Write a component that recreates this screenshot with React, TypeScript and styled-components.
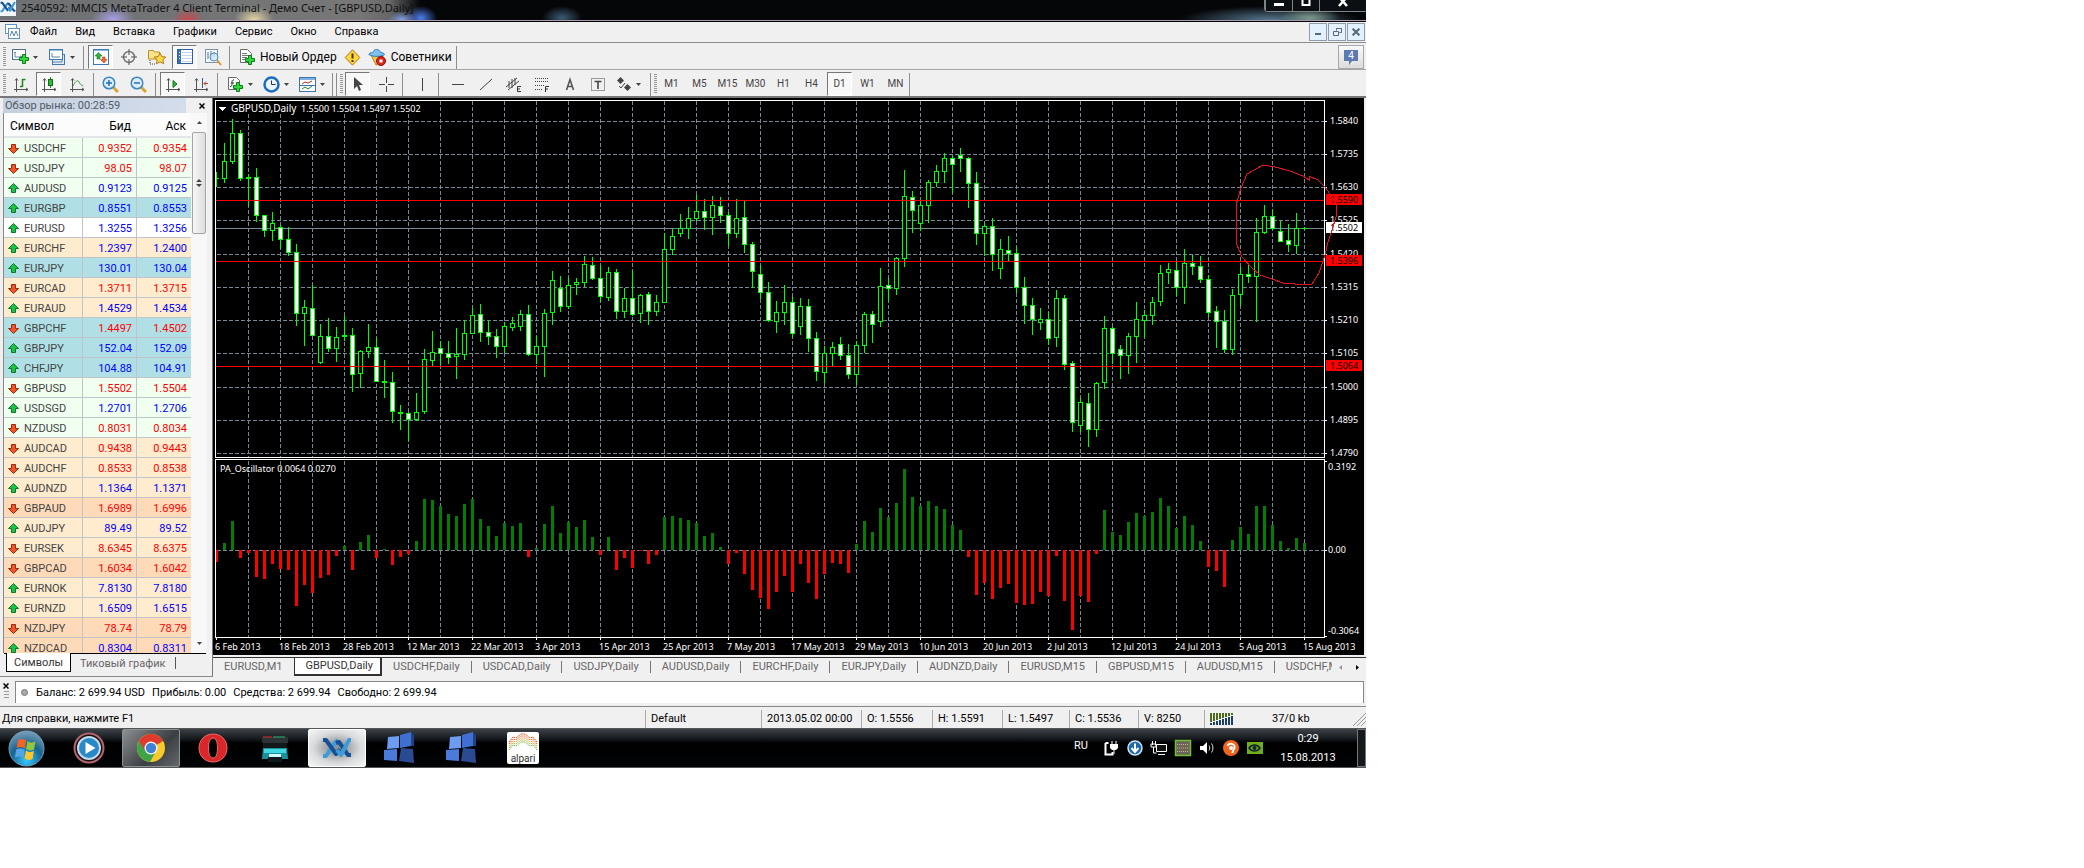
import React from "react";
import styled, { createGlobalStyle, css } from "styled-components";

const GlobalStyle = createGlobalStyle`
  *, *::before, *::after { box-sizing: border-box; }
  body {
    margin: 0;
    background: #fff;
    color: #000;
    font: 11px/14px Roboto, "Noto Sans", sans-serif;
  }
  button { font: inherit; color: inherit; margin: 0; padding: 0; border: 0; background: none; }
  svg { display: block; flex: none; }
`;

/* ---------- data ---------- */

type Tone = "mint" | "sky" | "plain" | "cream" | "peach";

const toneColor: Record<Tone, string> = {
  mint: "#f0fff0",
  sky: "#b0e0e6",
  plain: "#ffffff",
  cream: "#ffebcd",
  peach: "#ffdab9",
};

const quotes: [string, string, string, boolean, Tone][] = [
  ["USDCHF", "0.9352", "0.9354", false, "mint"],
  ["USDJPY", "98.05", "98.07", false, "mint"],
  ["AUDUSD", "0.9123", "0.9125", true, "mint"],
  ["EURGBP", "0.8551", "0.8553", true, "sky"],
  ["EURUSD", "1.3255", "1.3256", true, "plain"],
  ["EURCHF", "1.2397", "1.2400", true, "cream"],
  ["EURJPY", "130.01", "130.04", true, "sky"],
  ["EURCAD", "1.3711", "1.3715", false, "cream"],
  ["EURAUD", "1.4529", "1.4534", true, "cream"],
  ["GBPCHF", "1.4497", "1.4502", false, "sky"],
  ["GBPJPY", "152.04", "152.09", true, "sky"],
  ["CHFJPY", "104.88", "104.91", true, "sky"],
  ["GBPUSD", "1.5502", "1.5504", false, "mint"],
  ["USDSGD", "1.2701", "1.2706", true, "mint"],
  ["NZDUSD", "0.8031", "0.8034", false, "mint"],
  ["AUDCAD", "0.9438", "0.9443", false, "cream"],
  ["AUDCHF", "0.8533", "0.8538", false, "cream"],
  ["AUDNZD", "1.1364", "1.1371", true, "cream"],
  ["GBPAUD", "1.6989", "1.6996", false, "peach"],
  ["AUDJPY", "89.49", "89.52", true, "cream"],
  ["EURSEK", "8.6345", "8.6375", false, "cream"],
  ["GBPCAD", "1.6034", "1.6042", false, "peach"],
  ["EURNOK", "7.8130", "7.8180", true, "cream"],
  ["EURNZD", "1.6509", "1.6515", true, "cream"],
  ["NZDJPY", "78.74", "78.79", false, "peach"],
  ["NZDCAD", "0.8304", "0.8311", true, "peach"],
];

/* high, body top, body bottom, low, 1 = falling day */
const candles: number[][] = [
  [77,83,84,92,1],[48,66,84,88,0],[24,38,67,69,0],[35,38,84,86,1],[79,82,84,111,1],[73,82,121,127,1],
  [120,120,136,142,1],[117,128,136,146,0],[130,132,145,154,1],[132,144,158,161,1],[149,157,219,231,1],
  [205,212,219,251,0],[190,213,241,241,1],[229,241,268,269,0],[223,241,254,257,1],[232,242,254,267,0],
  [221,240,242,246,1],[233,240,280,297,1],[255,256,279,293,0],[229,252,257,263,0],[243,252,287,287,1],
  [265,286,288,303,1],[277,287,317,328,1],[310,317,319,335,1],[317,318,325,346,1],[298,317,325,326,0],
  [254,264,317,319,0],[236,257,266,271,0],[246,253,259,270,1],[246,258,263,269,1],[233,259,262,284,0],
  [225,238,260,265,0],[213,220,239,239,0],[209,219,238,247,1],[226,237,242,250,1],[234,241,252,263,1],
  [227,231,252,258,0],[222,228,233,236,0],[215,219,232,236,0],[210,219,260,261,1],[241,251,260,269,0],
  [214,218,252,282,0],[176,185,218,230,0],[181,193,212,217,1],[183,190,212,214,0],[183,187,190,200,0],
  [161,169,188,192,0],[162,170,184,185,1],[170,183,202,207,1],[172,177,203,206,0],[174,177,217,224,1],
  [193,203,217,223,0],[175,203,220,221,1],[199,200,219,228,0],[197,199,217,230,1],[200,207,217,221,0],
  [138,154,208,208,0],[134,141,155,160,0],[119,133,139,142,0],[112,123,134,144,0],[100,116,124,126,0],
  [104,116,123,135,1],[101,110,123,140,0],[102,111,121,128,1],[117,120,139,151,1],[104,123,139,143,0],
  [106,122,150,158,1],[147,149,177,193,1],[170,179,198,204,1],[187,197,226,227,1],[206,217,227,238,0],
  [190,207,218,230,0],[202,207,239,243,1],[203,211,232,240,0],[204,211,244,257,1],[237,243,277,286,1],
  [251,258,278,288,0],[247,252,259,271,0],[242,249,261,265,1],[249,260,280,284,1],[246,250,280,290,0],
  [217,219,251,258,0],[216,219,230,248,1],[173,191,227,232,0],[183,190,194,206,1],[162,163,194,200,0],
  [75,101,164,172,0],[96,102,116,138,1],[106,110,129,136,0],[85,87,111,128,0],[70,76,88,92,0],
  [58,63,77,88,0],[61,63,70,98,1],[53,60,64,77,1],[62,63,89,113,1],[77,88,139,150,1],
  [128,131,139,161,0],[123,131,160,176,1],[144,154,174,184,0],[141,155,159,166,1],[152,158,193,198,1],
  [182,192,211,229,1],[203,210,225,240,1],[213,224,228,235,0],[217,224,244,250,1],[195,203,243,252,0],
  [200,203,270,275,1],[266,268,328,337,1],[303,307,331,337,0],[298,308,335,352,1],[287,288,335,342,0],
  [221,233,288,294,0],[232,233,259,269,1],[250,254,261,284,1],[238,241,261,279,0],[207,224,242,268,0],
  [215,220,226,243,0],[202,207,221,230,0],[170,178,207,211,0],[168,174,178,189,0],[167,175,193,201,1],
  [154,168,193,209,0],[160,168,172,180,1],[161,171,185,188,1],[180,184,218,222,1],[211,216,227,253,1],
  [215,226,255,258,1],[194,200,255,260,0],[172,179,200,211,0],[170,179,182,188,1],[123,137,182,227,0],
  [110,121,138,139,0],[115,121,134,135,1],[126,136,147,147,1],[129,145,150,157,1],[118,133,151,159,0],
  [132,133,134,135,1],
];

const oscillator = [
  -12,7,29,-8,-3,-27,-29,-14,-19,-20,-56,-35,-43,-28,-25,-6,4,-20,8,15,-8,1,-15,-7,-4,9,51,50,44,36,34,46,51,
  31,24,14,27,24,27,-7,2,26,44,17,28,23,30,13,-5,13,-20,-8,-18,-1,-14,-5,33,34,32,30,27,14,17,3,-14,-3,-24,
  -40,-48,-59,-42,-26,-42,-14,-33,-49,-24,-13,-14,-23,6,29,18,42,33,47,81,53,44,49,44,41,25,20,-7,-45,-33,
  -49,-38,-34,-53,-55,-54,-42,-46,-6,-51,-80,-46,-52,-4,40,18,15,28,37,34,38,52,44,22,34,25,9,-17,-21,-37,
  10,23,16,44,44,25,9,2,12,7,
];

const priceScale: [string, number][] = [
  ["1.5840", 26], ["1.5735", 59], ["1.5630", 92], ["1.5525", 125], ["1.5420", 159], ["1.5315", 192],
  ["1.5210", 225], ["1.5105", 258], ["1.5000", 292], ["1.4895", 325], ["1.4790", 358],
];

const levels: [string, number][] = [["1.5590", 105], ["1.5396", 166], ["1.5064", 271]];

const dates = [
  "6 Feb 2013", "18 Feb 2013", "28 Feb 2013", "12 Mar 2013", "22 Mar 2013", "3 Apr 2013", "15 Apr 2013",
  "25 Apr 2013", "7 May 2013", "17 May 2013", "29 May 2013", "10 Jun 2013", "20 Jun 2013", "2 Jul 2013",
  "12 Jul 2013", "24 Jul 2013", "5 Aug 2013", "15 Aug 2013",
];

const chartTabs = [
  "EURUSD,M1", "GBPUSD,Daily", "USDCHF,Daily", "USDCAD,Daily", "USDJPY,Daily", "AUDUSD,Daily", "EURCHF,Daily",
  "EURJPY,Daily", "AUDNZD,Daily", "EURUSD,M15", "GBPUSD,M15", "AUDUSD,M15", "USDCHF,M15",
];

/* ---------- shell ---------- */

const Desktop = styled.div`
  width: 100%;
  max-width: 1366px;
  display: flex;
  flex-direction: column;
  background: #f1f0f1;
  overflow: hidden;
`;

const TitleBar = styled.header`
  height: 22px;
  display: flex;
  align-items: flex-start;
  border-bottom: 1px solid #000;
  box-shadow: inset 0 -1px #a89aac;
  background:
    radial-gradient(ellipse 22px 14px at 113px 20px, #a9a0ea, transparent),
    radial-gradient(ellipse 16px 12px at 188px 20px, #c8474b, transparent),
    radial-gradient(ellipse 20px 14px at 254px 20px, #e3d6a4, transparent),
    radial-gradient(ellipse 14px 9px at 402px 20px, #86a4ef, transparent),
    radial-gradient(ellipse 16px 12px at 421px 18px, #4c7ff0, transparent),
    radial-gradient(ellipse 20px 12px at 562px 18px, #3d5c74, transparent),
    radial-gradient(ellipse 30px 10px at 1310px 18px, #7d9a8c, transparent),
    radial-gradient(ellipse 90px 14px at 1270px 20px, #56788e, transparent),
    linear-gradient(90deg, #6d7173 0, #777 360px, #666 390px, #050608 420px);
`;

const AppLogo = styled.span`
  width: 16px;
  height: 16px;
  overflow: hidden;
  background: #f2f6fa;
`;

const Title = styled.h1`
  margin: 0 auto 0 5px;
  font: 11px/15px "Noto Sans", sans-serif;
  white-space: nowrap;
  color: #111;
`;

const CaptionButtons = styled.div`
  height: 12px;
  display: flex;
  border: 1px solid #7d8587;
  border-top: 0;
  border-right: 0;
  border-radius: 0 0 0 4px;
`;

const CaptionButton = styled.button<{ $wide?: boolean }>`
  width: ${(p) => (p.$wide ? 47 : 27)}px;
  height: 11px;
  overflow: hidden;
  display: flex;
  justify-content: center;
  color: #fff;
  border-left: 1px solid #7d8587;
  background: #0b0f14;
`;

const MenuBar = styled.nav`
  height: 21px;
  display: flex;
  align-items: center;
  padding-left: 5px;
  border-bottom: 1px solid #8d8d8d;
`;

const MenuItem = styled.button`
  padding: 0 9px;
  white-space: nowrap;
`;

const MenuList = styled.div`
  display: flex;
  margin-right: auto;
`;

const MdiButton = styled.button`
  width: 18px;
  height: 18px;
  margin-right: 1px;
  display: grid;
  place-items: center;
  border: 1px solid #8e9bab;
  background: #e3f0fd;
  color: #56687c;
`;

const Toolbar = styled.div<{ $last?: boolean }>`
  height: ${(p) => (p.$last ? 28 : 27)}px;
  display: flex;
  align-items: center;
  padding: 2px 0 0 3px;
  border-bottom: ${(p) => (p.$last ? "2px solid #777" : "1px solid #a4a4a4")};
`;

const Grip = styled.span`
  width: 3px;
  height: 20px;
  margin-right: 2px;
  flex: none;
  background: repeating-linear-gradient(#999 0 1px, transparent 1px 2px);
`;

const Separator = styled.span<{ $before?: number; $after?: number }>`
  width: 1px;
  height: 23px;
  flex: none;
  margin: 0 ${(p) => p.$after ?? 4}px 0 ${(p) => p.$before ?? 4}px;
  background: #8d8d8d;
`;

const Group = styled.div`
  display: flex;
  gap: 3px;
`;

const pressedStyle = css`
  border: 1px solid;
  border-color: #777 #fff #fff #777;
  background: #f8f8f8;
`;

const ToolButton = styled.button<{ $pressed?: boolean }>`
  width: 25px;
  height: 24px;
  display: grid;
  place-items: center;
  color: #444;
  ${(p) => p.$pressed && pressedStyle}
`;

const DropButton = styled.button<{ $wide?: boolean }>`
  width: ${(p) => (p.$wide ? 37 : 36)}px;
  height: 24px;
  padding-left: 3px;
  display: flex;
  align-items: center;
  gap: 4px;
`;

const LabelButton = styled.button<{ $gap: number }>`
  height: 24px;
  display: flex;
  align-items: center;
  gap: ${(p) => p.$gap}px;
  padding: 0 3px;
  font-size: 12px;
  white-space: nowrap;
`;

const PeriodButton = styled(ToolButton)`
  font-size: 10px;
`;

const NewsButton = styled.button`
  width: 26px;
  height: 24px;
  margin: 0 2px 0 auto;
  display: grid;
  place-items: center;
  border: 1px solid #a8a8a8;
  background: linear-gradient(#fafafa, #dcdcdc);
`;

/* ---------- market watch ---------- */

const Workspace = styled.main`
  display: flex;
`;

const WatchPanel = styled.section`
  width: 213px;
  flex: none;
  display: flex;
  flex-direction: column;
  margin-bottom: 4px;
  padding: 0 5px 0 3px;
  border-right: 1px solid #777;
  border-bottom: 1px solid #888;
`;

const WatchTitle = styled.div`
  height: 15px;
  display: flex;
  justify-content: space-between;
  color: #4f5a66;
  h2 {
    flex: 1;
    margin: 0 11px 0 0;
    padding-left: 2px;
    font: 11px/15px Roboto, "Noto Sans", sans-serif;
    background: linear-gradient(90deg, #c5cfde, #d3ddec);
  }
  button { width: 10px; display: grid; place-items: center; color: #000; }
`;

const WatchBody = styled.div`
  flex: 1 1 0;
  min-height: 0;
  overflow: hidden;
  display: flex;
  border-left: 1px solid #888;
`;

const QuoteTable = styled.table`
  width: 187px;
  align-self: flex-start;
  table-layout: fixed;
  border-collapse: separate;
  border-spacing: 0;
  th {
    height: 25px;
    padding: 2px 5px 0 6px;
    text-align: right;
    font-weight: 400;
    font-size: 12px;
    background: #fcfcfc;
    border-bottom: 2px solid #e3e6e8;
  }
  th:first-child { text-align: left; }
  td {
    height: 20px;
    padding: 2px 4px 0 0;
    text-align: right;
    border-bottom: 1px solid #c0c4c8;
    border-left: 1px solid #c0c4c8;
  }
  td:first-child { border-left: 0; }
`;

const QuoteRow = styled.tr<{ $tone: Tone; $up: boolean }>`
  background: ${(p) => toneColor[p.$tone]};
  color: ${(p) => (p.$up ? "#0000ff" : "#ff0000")};
`;

const SymbolCell = styled.span`
  display: flex;
  align-items: center;
  gap: 5px;
  padding-left: 4px;
  color: #444;
`;

const ScrollTrack = styled.div`
  width: 16px;
  display: flex;
  flex-direction: column;
  align-items: center;
  justify-content: space-between;
  background: #f8f8f8;
`;

const ScrollTop = styled.div`
  display: flex;
  flex-direction: column;
  align-items: center;
`;

const ArrowButton = styled.button`
  width: 16px;
  height: 19px;
  display: grid;
  place-items: center;
`;

const ScrollThumb = styled.div`
  width: 14px;
  height: 102px;
  display: grid;
  place-items: center;
  border: 1px solid #a5a5a5;
  border-radius: 2px;
  background: linear-gradient(90deg, #f6f6f6, #dedede);
`;

const WatchTabs = styled.div`
  height: 23px;
  display: flex;
  align-items: flex-start;
  padding-left: 2px;
  margin: 0 1px;
  border-top: 1px solid #000;
`;

const WatchTab = styled.button<{ $active?: boolean }>`
  height: 18px;
  padding: 1px 11px 0 9px;
  color: #666;
  background: linear-gradient(#555, #555) right 3px / 1px 12px no-repeat;
  ${(p) =>
    p.$active &&
    css`
      margin-top: -1px;
      height: 19px;
      padding: 1px 7px 0;
      color: #333;
      background: #fff;
      border: 1px solid #000;
      border-top: 0;
    `}
`;

/* ---------- chart ---------- */

const ChartArea = styled.section`
  flex: 1;
  min-width: 0;
  display: flex;
  flex-direction: column;
`;

const ChartCanvas = styled.div`
  margin-right: 2px;
  overflow: hidden;
  background: #000;
`;

const ChartTabs = styled.div`
  height: 24px;
  margin-top: 2px;
  display: flex;
  align-items: flex-start;
  overflow: hidden;
  border-top: 1px solid #333;
`;

const ChartTabList = styled.div`
  flex: 1;
  min-width: 0;
  display: flex;
  overflow: hidden;
`;

const ChartTab = styled.button<{ $active?: boolean; $bare?: boolean }>`
  flex: none;
  height: 18px;
  padding: 0 12px 0 11px;
  white-space: nowrap;
  color: #666;
  background: linear-gradient(#777, #777) right 3px / 1px 12px no-repeat;
  ${(p) => p.$bare && "background: none;"}
  ${(p) =>
    p.$active &&
    css`
      padding: 0 7px 0 10px;
      color: #333;
      background: #fff;
      border: 1px solid #333;
      border-width: 0 2px 2px 1px;
    `}
`;

const TabArrow = styled.button`
  width: 17px;
  height: 18px;
  display: grid;
  place-items: center;
`;

/* ---------- bottom bars ---------- */

const TerminalPane = styled.section`
  height: 26px;
  display: flex;
  padding-bottom: 3px;
  border-bottom: 1px solid #888;
`;

const TerminalGrip = styled.div`
  width: 15px;
  display: flex;
  flex-direction: column;
  align-items: center;
  gap: 2px;
  padding: 2px 3px 0 0;
  span {
    width: 5px;
    height: 9px;
    background: repeating-linear-gradient(#999 0 1px, transparent 1px 3px);
  }
`;

const BalanceBox = styled.div`
  flex: 1;
  margin-right: 2px;
  display: flex;
  align-items: center;
  gap: 7px;
  padding-left: 5px;
  white-space: nowrap;
  background: #fff;
  border: 1px solid #888;
  border-width: 1px 1px 0;
  i { width: 7px; height: 7px; margin-right: 1px; border-radius: 4px; background: #aaa; border: 1px solid #777; }
`;

const StatusBar = styled.footer`
  height: 21px;
  display: flex;
  align-items: flex-end;
  background: #f1f0f1;
  white-space: nowrap;
`;

const StatusHint = styled.span`
  flex: 1;
  padding: 0 0 2px 2px;
`;

const StatusCell = styled.span<{ $w: number }>`
  width: ${(p) => p.$w}px;
  height: 18px;
  display: flex;
  align-items: center;
  padding-left: 5px;
  border-left: 1px solid #aaa;
`;

const Traffic = styled.span`
  margin: 0 auto 0 38px;
`;

const Taskbar = styled.div`
  height: 40px;
  display: flex;
  align-items: center;
  gap: 4px;
  color: #fff;
  border-top: 1px solid #555;
  border-bottom: 1px solid #555;
  background: linear-gradient(#3c4248, #15191d 10px, #000 14px, #020406);
`;

const StartButton = styled.button`
  width: 56px;
  padding-left: 8px;
`;

const TaskButton = styled.button<{ $state?: "open" | "active" }>`
  width: 58px;
  height: 38px;
  display: grid;
  place-items: center;
  border-radius: 2px;
  ${(p) => p.$state === "open" && "border: 1px solid #8b9092; background: linear-gradient(135deg, #8c9093, #3b3f42 60%, #63686b);"}
  ${(p) => p.$state === "active" && "border: 1px solid #fff; background: radial-gradient(ellipse at center, #8f9395 15%, #d9dbdc 60%, #f6f6f6);"}
`;

const Language = styled.span`
  margin: 0 10px 4px auto;
`;

const Tray = styled.div`
  display: flex;
  gap: 6px;
`;

const Clock = styled.time`
  width: 80px;
  display: flex;
  flex-direction: column;
  gap: 5px;
  text-align: center;
`;

const ShowDesktop = styled.button`
  width: 9px;
  height: 38px;
  margin-left: 5px;
  border: 1px solid #777;
  background: #15191d;
`;

/* ---------- small icons ---------- */

const Caret = ({ dir = "down", color = "#444" }: { dir?: "down" | "up" | "left" | "right"; color?: string }) => {
  const turn = { down: 0, up: 180, left: 90, right: 270 }[dir];
  return (
    <svg width="5" height="5" viewBox="0 0 5 5">
      <path d="M0 1h5L2.5 4z" fill={color} transform={`rotate(${turn} 2.5 2.5)`} />
    </svg>
  );
};

const CloseMark = ({ size = 6 }: { size?: number }) => (
  <svg width={size} height={size} viewBox="0 0 6 6">
    <path d="M.5.5l5 5M5.5.5l-5 5" stroke="currentColor" strokeWidth="1.5" />
  </svg>
);

const Trend = ({ up }: { up: boolean }) => (
  <svg width="11" height="11" viewBox="0 0 11 11">
    <path
      d="M5.500.500L10.500 5.500H7.500V9.500H3.500V5.500H.500z"
      fill={up ? "#1fc04a" : "#f2552a"}
      stroke={up ? "#0b7a26" : "#9c2a0c"}
      strokeWidth="1"
      transform={up ? undefined : "rotate(180 5.5 5.5)"}
    />
  </svg>
);

const Plus = ({ x, y }: { x: number; y: number }) => (
  <path
    transform={`translate(${x} ${y})`}
    d="M3.500.500h3v3h3v3h-3v3h-3v-3h-3v-3h3z"
    fill="#2fd93c"
    stroke="#0a7f17"
  />
);

const Icon = ({ children, size = 16 }: { children: React.ReactNode; size?: number }) => (
  <svg width={size} height={size} viewBox={`0 0 ${size} ${size}`} fill="none">
    {children}
  </svg>
);

const NewChartIcon = () => (
  <Icon size={18}>
    <rect x="1.500" y="1.500" width="13" height="10" fill="#fff" stroke="#4d6f90" />
    <path d="M4 4v5h7M3 5l1-1 1 1M9 8l2 1-2 1" stroke="#6585a5" />
    <Plus x={8} y={6} />
  </Icon>
);

const ProfilesIcon = () => (
  <Icon size={18}>
    <rect x="4.500" y="6.500" width="12" height="10" fill="#dcebf8" stroke="#4178ad" />
    <rect x="1.500" y="1.500" width="13" height="10" fill="#fff" stroke="#4178ad" />
    <path d="M2 2.500h12" stroke="#9cc3e6" />
    <path d="M4 5v4h8M5 14h9v-3" stroke="#5e86ac" />
  </Icon>
);

const MarketWatchIcon = () => (
  <Icon>
    <rect x=".500" y=".500" width="15" height="15" fill="#fff" stroke="#3f78b5" />
    <path d="M1 1.500h14" stroke="#8db8e2" />
    <path d="M5.500 3.500L9 7H7v3H4V7H2z" fill="#2db53c" stroke="#15791f" strokeWidth=".600" />
    <path d="M11 14l3-3.500h-2V8h-2.500v2.500H7.500z" fill="#f06a3a" stroke="#a93512" strokeWidth=".600" />
  </Icon>
);

const TargetIcon = () => (
  <Icon>
    <circle cx="8" cy="8" r="5.500" stroke="#777" strokeWidth="1.500" />
    <path d="M8 0v6M8 10v6M0 8h6M10 8h6" stroke="#555" />
  </Icon>
);

const NavigatorIcon = () => (
  <Icon size={18}>
    <path d="M.500 3.500V2.500h5l1 1.500h5v7h-11z" fill="#f8e28a" stroke="#b98f1e" />
    <path d="M2 12v4h5" stroke="#444" strokeDasharray="1 1" />
    <path d="M12 5l1.800 3.600 4 .5-3 2.700.9 4-3.700-2-3.600 2 .8-4-3-2.700 4-.5z" fill="#ffd94a" stroke="#b07a12" />
  </Icon>
);

const TerminalIcon = () => (
  <Icon>
    <rect x=".500" y=".500" width="15" height="14" fill="#fff" stroke="#2f5f9d" />
    <rect x="1" y="1" width="3" height="13" fill="#3a6fb0" />
    <path d="M5 3.500h10M5 6.500h10M5 9.500h10M5 12.500h10" stroke="#c6d6ea" />
    <path d="M2 3.500h1M2 6.500h1M2 9.500h1" stroke="#fff" />
  </Icon>
);

const TesterIcon = () => (
  <Icon size={18}>
    <rect x="1.500" y="1.500" width="12" height="13" fill="#f6f9fc" stroke="#7d93a8" />
    <path d="M4 4v7M7 3v8M10 4v5" stroke="#54708c" />
    <circle cx="10" cy="9" r="4" fill="#cfe6fa" fillOpacity=".8" stroke="#4e8cc4" />
    <path d="M13 12l4 5" stroke="#d19a2a" strokeWidth="2" />
  </Icon>
);

const OrderIcon = () => (
  <Icon size={17}>
    <path d="M1.500.500h7l4 4v9h-11z" fill="#fff" stroke="#6b6b6b" />
    <path d="M3 4.500h5M3 6.500h7M3 8.500h5M3 10.500h4" stroke="#777" />
    <Plus x={6} y={6} />
  </Icon>
);

const AlertIcon = () => (
  <Icon size={17}>
    <path d="M8.500.800L15.800 8.500 8.500 16.200 1.200 8.500z" fill="#ffd83d" stroke="#a87a12" />
    <path d="M8.500 4.500v5M8.500 11v2" stroke="#4a3500" strokeWidth="2" />
  </Icon>
);

const ExpertIcon = () => (
  <Icon size={18}>
    <path d="M3 7l12 1-2 8-5 1z" fill="#f0c64a" stroke="#b88717" />
    <path d="M.800 6.500C2 4 5 5 5.500 3.500 6 .800 11 .800 12 3.500c.5 1.500 4 1 4.500 3-3 2.500-12 2.500-15.700 0z" fill="#7fc2ee" stroke="#2a7ab8" />
    <circle cx="13" cy="13" r="4.500" fill="#d9281a" stroke="#8d1109" />
    <rect x="11.500" y="11.500" width="3" height="3" fill="#fff" />
  </Icon>
);

const Axes = () => <path d="M3.500 3v13M1 13.500h14M2 4.500l1.500-2 1.500 2M13 12l2 1.500-2 1.500" stroke="#555" />;

const BarsIcon = () => (
  <Icon><Axes /><path d="M9.500 3v8M9.500 3.500h3M7 10.500h2.500" stroke="#17871f" strokeWidth="1.500" /></Icon>
);
const CandlesIcon = () => (
  <Icon><Axes /><path d="M9.500 1v11" stroke="#17871f" /><rect x="7.500" y="3.500" width="4" height="6" fill="#2fbb3a" stroke="#107018" /></Icon>
);
const LineIcon = () => (
  <Icon><Axes /><path d="M4 10c3-6 5-6 6-4s2 3 4 4" stroke="#2f9a45" /></Icon>
);
const ZoomIcon = ({ plus }: { plus?: boolean }) => (
  <Icon size={17}>
    <path d="M11 11l5 5" stroke="#d8a52e" strokeWidth="3" />
    <circle cx="7" cy="7" r="5.800" fill="#d9edfc" stroke="#3d86c6" strokeWidth="1.500" />
    <path d={plus ? "M4 7h6M7 4v6" : "M4 7h6"} stroke="#2a6eb0" strokeWidth="1.500" />
  </Icon>
);
const ScrollIcon = () => <Icon><Axes /><path d="M8 4.500l4 3.500-4 3.500z" fill="#35b93f" stroke="#14771c" /></Icon>;
const ShiftIcon = () => (
  <Icon><Axes /><path d="M9.500 2v10" stroke="#2b5e8e" /><path d="M15 7.500h-4M13 5.500l-2 2 2 2" stroke="#c2401b" /></Icon>
);
const IndicatorIcon = () => (
  <Icon size={17}>
    <path d="M1.500 1.500h8l3 3v9h-11z" fill="#fff" stroke="#6b6b6b" />
    <path d="M7 4C5 3.500 5 5 5 7s0 4-2 3.500M4 7h3" stroke="#333" />
    <Plus x={6} y={6} />
  </Icon>
);
const ClockIcon = () => (
  <Icon size={17}>
    <circle cx="8.500" cy="8.500" r="7" fill="#e8f4ff" stroke="#1c6cc0" strokeWidth="2.500" />
    <path d="M8.500 4.500v4h4" stroke="#333" />
  </Icon>
);
const TemplateIcon = () => (
  <Icon size={17}>
    <rect x=".500" y="1.500" width="16" height="14" fill="#fff" stroke="#3c74b0" />
    <path d="M1 3h15" stroke="#7fb0e0" strokeWidth="2" />
    <path d="M3 8l3-2 3 1 4-2" stroke="#a83226" />
    <path d="M3 13l3-2 3 2 4-3" stroke="#1f8b2a" />
    <path d="M1 9.500h15" stroke="#3c74b0" />
  </Icon>
);
const CursorIcon = () => <Icon><path d="M4 1v12l3-3 2 5 2-1-2-5h4z" fill="#444" /></Icon>;
const CrossIcon = () => <Icon><path d="M8.500 1v6M8.500 10v6M1 8.500h6M10 8.500h6" stroke="#444" /></Icon>;
const VLineIcon = () => <Icon><path d="M8.500 2v13" stroke="#444" /></Icon>;
const HLineIcon = () => <Icon><path d="M2 8.500h12" stroke="#444" /></Icon>;
const SlopeIcon = () => <Icon><path d="M2 14L14 3" stroke="#444" /></Icon>;
const ChannelIcon = () => (
  <Icon>
    <path d="M0 11L11 2M2 14L13 5M3 5v7M6 3v9M9 2v7" stroke="#444" />
    <path d="M15 10.500h-3.500v5H15M11.500 13H14" stroke="#333" />
  </Icon>
);
const FiboIcon = () => (
  <Icon>
    <path d="M1 2.500h13M1 5.500h13M1 9.500h9M1 13.500h8" stroke="#444" strokeDasharray="1 1" />
    <path d="M15 10.500h-3.500V16M11.500 13H14" stroke="#333" />
  </Icon>
);
const LetterIcon = () => <Icon><path d="M4.500 14L8 3.500 11.500 14M6 10.500h4" stroke="#555" strokeWidth="1.600" /></Icon>;
const LabelIcon = () => (
  <Icon>
    <rect x="1.500" y="2.500" width="13" height="12" stroke="#444" strokeDasharray="1 1" />
    <path d="M4.500 5.500h7M8 5.500V13" stroke="#444" strokeWidth="1.600" />
  </Icon>
);
const ArrowsIcon = () => (
  <Icon>
    <path d="M4.500 1L8 4.500 4.500 8 1 4.500zM11.500 8l3.500 3.500-3.500 3.500L8 11.500z" fill="#444" />
    <path d="M3 10l2 2 4-5" stroke="#444" />
  </Icon>
);
const ChartsIcon = () => (
  <Icon>
    <rect x=".500" y=".500" width="11" height="9" fill="#fff" stroke="#5e93c6" />
    <rect x="3.500" y="4.500" width="11" height="10" fill="#fff" stroke="#5e93c6" />
    <path d="M5 12l2-5 2 5 2-5 2 5" stroke="#5e86ac" />
  </Icon>
);
const Wave = ({ w, h }: { w: number; h: number }) => (
  <svg width={w} height={h} viewBox="0 0 30 22" fill="none" strokeWidth="4" strokeLinejoin="round">
    <path d="M1 19h3L12 7l4-4" stroke="#3d9bd8" />
    <path d="M1 3h3l10 14 4-5" stroke="#174f94" />
    <path d="M14 6l3-1 9 13h3" stroke="#174f94" />
    <path d="M15 13l4 5L27 3h2" stroke="#3d9bd8" />
  </svg>
);

/* ---------- chart drawing ---------- */

const LEFT = 216;
const STEP = 8;

const PriceChart = () => (
  <svg width="1151" height="557" viewBox="213 3 1151 557" role="img" aria-label="GBPUSD,Daily"
    shapeRendering="crispEdges" fontFamily='"Noto Sans", sans-serif' fontSize="9">
    <g stroke="#778899" strokeDasharray="4 2">
      {priceScale.map(([, y]) => <path key={y} d={`M217 ${y + 0.5}H1324`} />)}
      {Array.from({ length: 34 }, (_, i) => 248 + i * 32).map((x) => (
        <path key={x} d={`M${x + 0.5} ${x < 424 ? 19 : 6}V362M${x + 0.5} 366V542`} />
      ))}
      <path d="M217 455.500H1324" />
    </g>
    <path d="M216 133.500H1324" stroke="#778899" />
    {candles.map(([high, top, bottom, low, falling], i) => {
      const x = LEFT + i * STEP;
      return (
        <g key={i} fill="#00ff00">
          <rect x={x} y={high} width="1" height={low - high} />
          <rect x={x - 2} y={top} width="5" height={bottom - top} />
          {bottom - top > 2 && (
            <rect x={x - 1} y={top + 1} width="3" height={bottom - top - 2} fill={falling ? "#fff" : "#000"} />
          )}
        </g>
      );
    })}
    {levels.map(([t, y]) => <path key={t} d={`M216 ${y + 0.5}H1324`} stroke="#f00" />)}
    {oscillator.map((v, i) => (
      <rect key={i} x={LEFT + i * STEP - 1} y={v > 0 ? 455 - v : 455} width="3" height={Math.abs(v)}
        fill={v > 0 ? "#008000" : "#f00"} />
    ))}
    <rect x="213" y="3" width="2" height="557" fill="#000" />
    <path d="M215.500 362.500V5.500H1324.500V362.500zM215.500 542.500V364.500H1324.500V542.500z" fill="none" stroke="#fff" />
    <g stroke="#fff">
      {priceScale.map(([, y]) => <path key={y} d={`M1325 ${y + 0.5}h2`} />)}
      {dates.map((d, i) => <path key={d} d={`M${LEFT + i * 64 + 0.5} 543v2`} />)}
      <path d="M1325 366.500h2M1325 455.500h2M1325 541.500h2" />
    </g>
    <path d="M218 12h8l-4 4z" fill="#fff" />
    <g fill="#fff">
      <text x="231" y="17" fontSize="10">GBPUSD,Daily</text>
      <text x="301" y="17">1.5500 1.5504 1.5497 1.5502</text>
      <text x="220" y="377">PA_Oscillator 0.0064 0.0270</text>
      {priceScale.map(([t, y]) => <text key={t} x="1330" y={y + 3}>{t}</text>)}
      <text x="1328" y="375">0.3192</text>
      <text x="1328" y="458">0.00</text>
      <text x="1328" y="539">-0.3064</text>
      {dates.map((d, i) => <text key={d} x={LEFT - 1 + i * 64} y="555">{d}</text>)}
    </g>
    {levels.map(([t, y]) => (
      <g key={t}>
        <rect x="1326" y={y - 6} width="36" height="11" fill="#f00" />
        <text x="1330" y={y + 3} fill="#000">{t}</text>
      </g>
    ))}
    <rect x="1326" y="127" width="36" height="11" fill="#fff" />
    <text x="1330" y="136" fill="#000">1.5502</text>
    <path
      d="M1263 70L1275 72 1290 76 1303 81 1309 85V81L1318 85 1325 92 1332 102 1336 110V122L1332 135 1328 147 1325 160 1319 178 1312 189H1295L1283 188 1272 184 1260 180 1252 173 1242 162 1237 150 1236 133V110L1241 93 1247 79z"
      fill="none" stroke="#e8101c"
    />
  </svg>
);

/* ---------- taskbar icons ---------- */

const StartOrb = () => (
  <svg width="37" height="37" viewBox="0 0 37 37">
    <defs>
      <radialGradient id="orb" cx="50%" cy="85%" r="90%">
        <stop offset="0" stopColor="#35c8ff" /><stop offset=".5" stopColor="#17638f" /><stop offset="1" stopColor="#8aa8bb" />
      </radialGradient>
    </defs>
    <circle cx="18.500" cy="18.500" r="17.500" fill="url(#orb)" stroke="#6fa0bd" />
    <path d="M10 10c3-1.500 5-1.500 8 .5l-1 8c-3-2-5-2-8.500-.5z" fill="#f0652a" />
    <path d="M19.500 11c3 2 5 2 8 .5l-1.500 8c-3 1.500-5 1-8-.5z" fill="#8fc63f" />
    <path d="M8.200 19.500c3-1.500 5-1.500 8.300.5l-1 8c-3-2-5-2-8.500-.5z" fill="#55a5e6" />
    <path d="M18 20.500c3 2 5 2 8 .5l-1.500 8c-3 1.500-5 1-8-.5z" fill="#fdc62f" />
  </svg>
);

const PlayerIcon = () => (
  <svg width="32" height="32" viewBox="0 0 32 32">
    <circle cx="16" cy="16" r="14.500" fill="#1a1012" stroke="#b5656c" strokeWidth="2" />
    <circle cx="16" cy="16" r="11" fill="#2989c8" stroke="#c3dbe8" strokeWidth="2" />
    <path d="M12.500 10l10 6-10 6z" fill="#fff" />
  </svg>
);

const ChromeIcon = () => (
  <svg width="30" height="30" viewBox="0 0 30 30">
    <circle cx="15" cy="15" r="14" fill="#f7c92c" />
    <path d="M15 15L2.900 8A14 14 0 0 1 27.100 8z" fill="#de3b2c" />
    <path d="M15 15L2.900 8A14 14 0 0 0 14 29l5-9z" fill="#3fa447" />
    <path d="M15 8h12.100A14 14 0 0 0 3 8l5.500 9z" fill="#de3b2c" />
    <circle cx="15" cy="15" r="6.500" fill="#fff" />
    <circle cx="15" cy="15" r="5.200" fill="#3f80d8" />
  </svg>
);

const OperaIcon = () => (
  <svg width="30" height="30" viewBox="0 0 30 30">
    <path fillRule="evenodd" d="M15 1C23 1 29 7 29 15s-6 14-14 14S1 23 1 15 7 1 15 1zm0 4c-3.500 0-4.500 5-4.500 10s1 10 4.500 10 4.500-5 4.500-10S18.500 5 15 5z" fill="#d8262a" stroke="#f06a62" />
  </svg>
);

const PrinterIcon = () => (
  <svg width="30" height="30" viewBox="0 0 30 30">
    <path d="M2 4h26v6H2z" fill="#2b3334" /><path d="M3 4h9" stroke="#d33" /><path d="M13 4h12" stroke="#2bb673" />
    <path d="M3 10h24v5H3z" fill="#131819" /><path d="M3 15h24l1 11H2z" fill="#1b8f9c" />
    <path d="M4 16h22v4H4z" fill="#3fd6e2" /><path d="M9 21h12v3H9z" fill="#d3fbff" /><path d="M8 24h14v5H8z" fill="#0d1a1c" />
  </svg>
);

const CubesIcon = () => (
  <svg width="32" height="32" viewBox="0 0 32 32">
    <path d="M5 5l11-1v12l-12 1z" fill="#6d9cf2" /><path d="M17 3l11-3v14l-11 2z" fill="#3f6fd0" />
    <path d="M1 18l13-1v12l-13-1z" fill="#4a7ada" /><path d="M18 16l12 1 1 14-15-2z" fill="#2a4a92" />
    <path d="M28 0l3 3v11l-3 0z" fill="#23407f" />
  </svg>
);

const AlpariTile = styled.span`
  width: 32px;
  height: 32px;
  display: flex;
  flex-direction: column;
  align-items: center;
  justify-content: space-between;
  border-radius: 2px;
  background: #fff;
  color: #333;
  font-size: 10px;
  line-height: 11px;
`;

const AlpariIcon = () => (
  <AlpariTile>
    <svg width="30" height="19" viewBox="0 0 30 19" fill="none" strokeDasharray="1.500 .800">
      {["#d9401f", "#e2662a", "#e29a3a", "#a8b53a", "#6fb23f"].map((c, i) => (
        <path key={c} d={`M1 ${10 + i * 2}L5 ${5 + i * 2}l3 1 5-4h4l5 4 3-1 4 5`} stroke={c} strokeWidth="1" />
      ))}
    </svg>
    alpari
  </AlpariTile>
);

const trayIcons: [string, React.ReactNode][] = [
  ["Питание", <><path d="M3.500 4v11.500h7V13M3.500 4h3" stroke="#fff" strokeWidth="2" /><path d="M8 5h8v4l-2 2h-4L8 9z" fill="#fff" /><path d="M10 2v3M14 2v3M12 11v4" stroke="#fff" /></>],
  ["Загрузки", <><circle cx="9" cy="9" r="7" fill="#1d6aa8" stroke="#cfe6f5" strokeWidth="1.500" /><path d="M9 4.500v8M5.500 9L9 13l3.500-4" stroke="#fff" strokeWidth="2" /></>],
  ["Сеть", <><path d="M6.500 5.500h10v7h-10z" fill="#111" stroke="#fff" /><path d="M8 15.500h7M2.500 2v4M5.500 2v4M1 5h5v3H1zM3.500 8v6h3" stroke="#fff" /></>],
  ["Видео", <><rect x="1.500" y="1.500" width="15" height="15" fill="#6d6458" stroke="#6fbf35" strokeWidth="1.500" /><path d="M3 5.500h12M3 9h12M3 12.500h12" stroke="#c9b28e" strokeDasharray="1 1" /></>],
  ["Громкость", <><path d="M2 7h3l4-4v12l-4-4H2z" fill="#fff" /><path d="M11 6.500c1 1.500 1 3.500 0 5M13.500 4.500c2 2.500 2 6.500 0 9" stroke="#ddd" /></>],
  ["Антивирус", <><circle cx="9" cy="9" r="8" fill="#f2641d" /><path d="M5.500 7c1-3 7-3 7 1 0 3-2 3-2 6" stroke="#fff" strokeWidth="2" /><circle cx="9" cy="9" r="2" fill="#fff" /></>],
  ["NVIDIA", <><rect x="1" y="3" width="16" height="12" fill="#6fae1a" /><path d="M3 9c3-4 8-4 11 0-3 4-8 4-11 0z" stroke="#123" strokeWidth="1.500" /><circle cx="8.500" cy="9" r="2" fill="#123" /></>],
];

/* ---------- page ---------- */

const Tool = ({ name, pressed, children }: { name: string; pressed?: boolean; children: React.ReactNode }) => (
  <ToolButton aria-label={name} aria-pressed={pressed} $pressed={pressed}>{children}</ToolButton>
);

export default function App() {
  return (
    <>
      <GlobalStyle />
      <Desktop>
        <TitleBar>
          <AppLogo><Wave w={16} h={14} /></AppLogo>
          <Title>2540592: MMCIS MetaTrader 4 Client Terminal - Демо Счет - [GBPUSD,Daily]</Title>
          <CaptionButtons>
            <CaptionButton aria-label="Свернуть"><svg width="12" height="9"><path d="M1 4.500h10" stroke="#fff" strokeWidth="3" /></svg></CaptionButton>
            <CaptionButton aria-label="Развернуть"><svg width="12" height="9"><path d="M2.500-2h7v7h-7z" fill="none" stroke="#fff" strokeWidth="2" /></svg></CaptionButton>
            <CaptionButton $wide aria-label="Закрыть"><svg width="12" height="9"><path d="M2-3l8 9M10-3L2 6" stroke="#fff" strokeWidth="2.500" /></svg></CaptionButton>
          </CaptionButtons>
        </TitleBar>

        <MenuBar>
          <ChartsIcon />
          <MenuList>
            {["Файл", "Вид", "Вставка", "Графики", "Сервис", "Окно", "Справка"].map((m) => <MenuItem key={m}>{m}</MenuItem>)}
          </MenuList>
          <MdiButton aria-label="Свернуть окно"><svg width="8" height="8"><path d="M1 6h6" stroke="currentColor" strokeWidth="2" /></svg></MdiButton>
          <MdiButton aria-label="Восстановить окно"><svg width="9" height="9" fill="none"><path d="M3.500 2.500v-2h5v4h-2M.500 3.500h5v4h-5z" stroke="currentColor" /></svg></MdiButton>
          <MdiButton aria-label="Закрыть окно"><CloseMark size={8} /></MdiButton>
        </MenuBar>

        <Toolbar>
          <Grip />
          <DropButton $wide aria-label="Новый график"><NewChartIcon /><Caret /></DropButton>
          <DropButton $wide aria-label="Профили"><ProfilesIcon /><Caret /></DropButton>
          <Separator $before={1} />
          <Group>
            <Tool name="Обзор рынка" pressed><MarketWatchIcon /></Tool>
            <Tool name="Окно данных"><TargetIcon /></Tool>
            <Tool name="Навигатор"><NavigatorIcon /></Tool>
            <Tool name="Терминал" pressed><TerminalIcon /></Tool>
            <Tool name="Тестер"><TesterIcon /></Tool>
          </Group>
          <Separator $after={6} />
          <LabelButton $gap={4}><OrderIcon />Новый Ордер</LabelButton>
          <Tool name="Важное"><AlertIcon /></Tool>
          <LabelButton $gap={5}><ExpertIcon />Советники</LabelButton>
          <Separator $before={1} />
          <NewsButton aria-label="4">
            <svg width="16" height="17" viewBox="0 0 16 17">
              <path d="M1 1h14v11H9l-3 4v-4H1z" fill="#5a7ab0" />
              <text x="8" y="10" textAnchor="middle" fontSize="10" fontFamily="Roboto, sans-serif" fill="#fff">4</text>
            </svg>
          </NewsButton>
        </Toolbar>

        <Toolbar $last>
          <Grip />
          <Group>
            <Tool name="Бары"><BarsIcon /></Tool>
            <Tool name="Свечи" pressed><CandlesIcon /></Tool>
            <Tool name="Линия"><LineIcon /></Tool>
          </Group>
          <Separator />
          <Group>
            <Tool name="Увеличить"><ZoomIcon plus /></Tool>
            <Tool name="Уменьшить"><ZoomIcon /></Tool>
          </Group>
          <Separator />
          <Group>
            <Tool name="Автопрокрутка" pressed><ScrollIcon /></Tool>
            <Tool name="Сдвиг графика"><ShiftIcon /></Tool>
          </Group>
          <Separator $after={6} />
          <DropButton aria-label="Индикаторы"><IndicatorIcon /><Caret /></DropButton>
          <DropButton aria-label="Периоды"><ClockIcon /><Caret /></DropButton>
          <DropButton aria-label="Шаблоны"><TemplateIcon /><Caret /></DropButton>
          <Separator $before={0} $after={3} />
          <Separator $before={0} $after={3} />
          <Grip />
          <Group>
            <Tool name="Курсор" pressed><CursorIcon /></Tool>
            <Tool name="Перекрестие"><CrossIcon /></Tool>
          </Group>
          <Separator $after={6} />
          <Tool name="Вертикальная линия"><VLineIcon /></Tool>
          <Separator $after={6} />
          <Group>
            <Tool name="Горизонтальная линия"><HLineIcon /></Tool>
            <Tool name="Трендовая линия"><SlopeIcon /></Tool>
            <Tool name="Канал"><ChannelIcon /></Tool>
            <Tool name="Фибоначчи"><FiboIcon /></Tool>
            <Tool name="Текст"><LetterIcon /></Tool>
            <Tool name="Метка"><LabelIcon /></Tool>
            <DropButton aria-label="Стрелки"><ArrowsIcon /><Caret /></DropButton>
          </Group>
          <Separator $before={1} $after={3} />
          <Grip />
          <Group>
            {["M1", "M5", "M15", "M30", "H1", "H4", "D1", "W1", "MN"].map((p) => (
              <PeriodButton key={p} $pressed={p === "D1"}>{p}</PeriodButton>
            ))}
          </Group>
          <Separator $before={1} />
        </Toolbar>

        <Workspace>
          <WatchPanel>
            <WatchTitle>
              <h2>Обзор рынка: 00:28:59</h2>
              <button aria-label="Закрыть обзор рынка"><CloseMark /></button>
            </WatchTitle>
            <WatchBody>
              <QuoteTable>
                <colgroup><col width="78" /><col width="54" /><col width="55" /></colgroup>
                <thead><tr><th>Символ</th><th>Бид</th><th>Аск</th></tr></thead>
                <tbody>
                  {quotes.map(([symbol, bid, ask, up, tone]) => (
                    <QuoteRow key={symbol} $tone={tone} $up={up}>
                      <td><SymbolCell><Trend up={up} />{symbol}</SymbolCell></td>
                      <td>{bid}</td>
                      <td>{ask}</td>
                    </QuoteRow>
                  ))}
                </tbody>
              </QuoteTable>
              <ScrollTrack>
                <ScrollTop>
                  <ArrowButton aria-label="Вверх"><Caret dir="up" /></ArrowButton>
                  <ScrollThumb>
                    <svg width="6" height="8"><path d="M0 3l3-3 3 3zM0 5h6l-3 3z" fill="#444" /></svg>
                  </ScrollThumb>
                </ScrollTop>
                <ArrowButton aria-label="Вниз"><Caret /></ArrowButton>
              </ScrollTrack>
            </WatchBody>
            <WatchTabs>
              <WatchTab $active>Символы</WatchTab>
              <WatchTab>Тиковый график</WatchTab>
            </WatchTabs>
          </WatchPanel>

          <ChartArea>
            <ChartCanvas><PriceChart /></ChartCanvas>
            <ChartTabs>
              <ChartTabList>
                {chartTabs.map((t, i) => <ChartTab key={t} $active={i === 1} $bare={i === 0}>{t}</ChartTab>)}
              </ChartTabList>
              <TabArrow aria-label="Влево"><Caret dir="left" color="#999" /></TabArrow>
              <TabArrow aria-label="Вправо"><Caret dir="right" color="#000" /></TabArrow>
            </ChartTabs>
          </ChartArea>
        </Workspace>

        <TerminalPane>
          <TerminalGrip><CloseMark /><span /></TerminalGrip>
          <BalanceBox>
            <i />
            <span>Баланс: 2 699.94 USD</span><span>Прибыль: 0.00</span>
            <span>Средства: 2 699.94</span><span>Свободно: 2 699.94</span>
          </BalanceBox>
        </TerminalPane>

        <StatusBar>
          <StatusHint>Для справки, нажмите F1</StatusHint>
          <StatusCell $w={116}>Default</StatusCell>
          <StatusCell $w={100}>2013.05.02 00:00</StatusCell>
          <StatusCell $w={71}>O: 1.5556</StatusCell>
          <StatusCell $w={70}>H: 1.5591</StatusCell>
          <StatusCell $w={67}>L: 1.5497</StatusCell>
          <StatusCell $w={69}>C: 1.5536</StatusCell>
          <StatusCell $w={66}>V: 8250</StatusCell>
          <StatusCell $w={162}>
            <svg width="24" height="12" shapeRendering="crispEdges">
              {Array.from({ length: 8 }, (_, i) => (
                <g key={i}>
                  <rect x={i * 3} y="0" width="2" height={9 - i} fill="#4c6b1f" />
                  <rect x={i * 3} y={10 - i} width="2" height={2 + i} fill="#1e3f66" />
                </g>
              ))}
            </svg>
            <Traffic>37/0 kb</Traffic>
            <svg width="14" height="14"><path d="M1 14L14 1M5 14l9-9M9 14l5-5" stroke="#999" /></svg>
          </StatusCell>
        </StatusBar>

        <Taskbar>
          <StartButton aria-label="Пуск"><StartOrb /></StartButton>
          <TaskButton aria-label="Windows Media Player"><PlayerIcon /></TaskButton>
          <TaskButton $state="open" aria-label="Chrome"><ChromeIcon /></TaskButton>
          <TaskButton aria-label="Opera"><OperaIcon /></TaskButton>
          <TaskButton aria-label="Сканер"><PrinterIcon /></TaskButton>
          <TaskButton $state="active" aria-label="MetaTrader"><Wave w={30} h={22} /></TaskButton>
          <TaskButton aria-label="Терминал 2"><CubesIcon /></TaskButton>
          <TaskButton aria-label="Терминал 3"><CubesIcon /></TaskButton>
          <TaskButton aria-label="alpari"><AlpariIcon /></TaskButton>
          <Language>RU</Language>
          <Tray>
            {trayIcons.map(([name, shape]) => <span key={name} title={name}><Icon size={18}>{shape}</Icon></span>)}
          </Tray>
          <Clock><span>0:29</span><span>15.08.2013</span></Clock>
          <ShowDesktop aria-label="Рабочий стол" />
        </Taskbar>
      </Desktop>
    </>
  );
}
